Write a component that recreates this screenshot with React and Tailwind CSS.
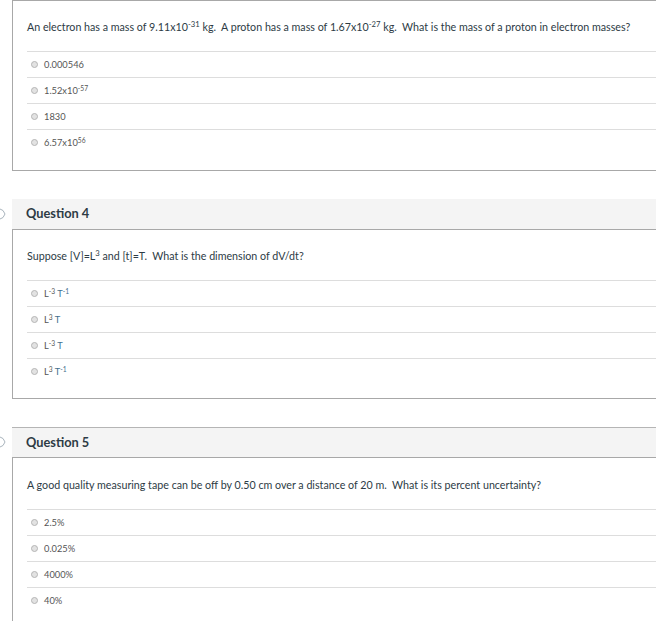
import React from "react";

const Sup = ({ children }) => <sup className="text-[0.72em]">{children}</sup>;

const q1Options = [
    <>0.000546</>,
    <>1.52x10<Sup>-57</Sup></>,
    <>1830</>,
    <>6.57x10<Sup>56</Sup></>,
];

const T = ({ children }) => <span className="text-[#45708f]">{children}</span>;

const q4Options = [
    <>L<Sup>-3</Sup> <T>T<Sup>-1</Sup></T></>,
    <>L<Sup>3</Sup> <T>T</T></>,
    <>L<Sup>-3</Sup> <T>T</T></>,
    <>L<Sup>3</Sup> <T>T<Sup>-1</Sup></T></>,
];

const q5Options = [<>2.5%</>, <>0.025%</>, <>4000%</>, <>40%</>];

function Option({ children }) {
    return (
        <div className="h-[26px] border-t border-[#dddddd] flex items-center pl-[4px]">
            {/* радио-кнопка */}
            <span className="w-[7px] h-[7px] rounded-full bg-[#e2e2e2] border border-[#b5b5b5] shrink-0"></span>
            <span className="ml-[6px] text-[9.3px] text-[#555555] leading-none">{children}</span>
        </div>
    );
}

function Card({ question, options, pad = "pt-[17px]", bottom = "pb-[14px]", top = false }) {
    return (
        <div
            className={
                "w-[680px] shrink-0 border-l border-b border-[#a8a8a8] pl-[14px] " +
                (top ? "border-t " : "") +
                bottom
            }
        >
            <div className={pad + " pb-[15px] text-[10.7px] leading-[18px] text-[#2d3b45]"}>{question}</div>
            {options.map((o, i) => (
                <Option key={i}>{o}</Option>
            ))}
        </div>
    );
}

function Header({ title, topBorder }) {
    return (
        <div className="flex">
            <div className="w-[12px] shrink-0 relative">
                {/* иконка флажка, обрезана краем */}
                <svg className="absolute -left-[6px] top-[9px]" width="12" height="12" viewBox="0 0 12 12">
                    <path d="M6 1 L9 2.5 L11 6 L9 9.5 L6 11" fill="none" stroke="#a9b4bd" strokeWidth="1" />
                </svg>
            </div>
            <div
                className={
                    "w-[680px] shrink-0 h-[31px] bg-[#f4f4f4] border-b border-[#a8a8a8] flex items-center pl-[14px] " +
                    (topBorder ? "border-t border-t-[#b5b5b5]" : "")
                }
            >
                <span className="text-[12.8px] font-bold text-[#2d3b45]">{title}</span>
            </div>
        </div>
    );
}

export default function App() {
    return (
        <div className="w-[656px] h-[621px] overflow-hidden bg-white font-['Lato','Liberation_Sans',sans-serif]">
            <div className="flex">
                <div className="w-[12px] shrink-0"></div>
                <Card
                    top
                    bottom="pb-[15px]"
                    question={
                        <>
                            An electron has a mass of 9.11x10<Sup>-31</Sup> kg.&nbsp; A proton has a mass of 1.67x10
                            <Sup>-27</Sup> kg.&nbsp; What is the mass of a proton in electron masses?
                        </>
                    }
                    options={q1Options}
                />
            </div>

            <div className="h-[28px]"></div>
            <Header title="Question 4" />
            <div className="flex">
                <div className="w-[12px] shrink-0"></div>
                <Card
                    question={
                        <>
                            Suppose [V]=L<Sup>3</Sup> and [t]=T.&nbsp; What is the dimension of dV/dt?
                        </>
                    }
                    options={q4Options}
                />
            </div>

            <div className="h-[28px]"></div>
            <Header title="Question 5" topBorder />
            <div className="flex">
                <div className="w-[12px] shrink-0"></div>
                <Card
                    pad="pt-[18px]"
                    bottom="pb-[40px]"
                    question={
                        <>
                            A good quality measuring tape can be off by 0.50 cm over a distance of 20 m.&nbsp; What is its
                            percent uncertainty?
                        </>
                    }
                    options={q5Options}
                />
            </div>
        </div>
    );
}
